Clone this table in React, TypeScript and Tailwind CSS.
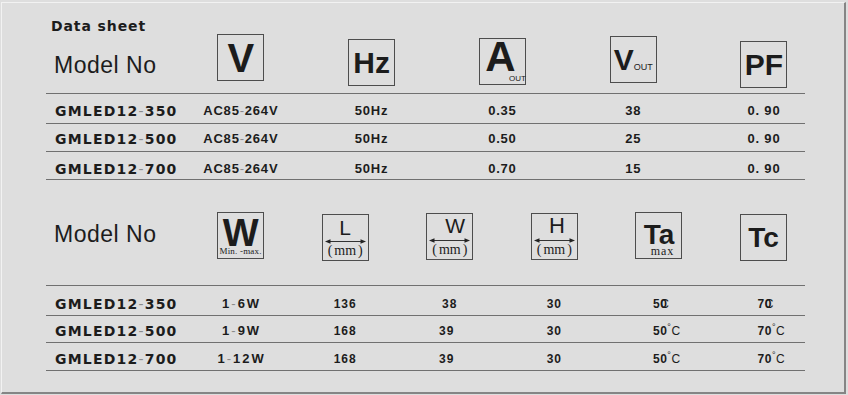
import type { ReactNode } from "react";

const Dash = () => <span className="font-normal text-[#8a8a8a]">-</span>;

// grey framed unit symbol, 47x47
const IconBox = ({ className = "", children }: { className?: string; children: ReactNode }) => (
  <div className={`relative w-[47px] h-[47px] border border-[#4d4d4d] ${className}`}>{children}</div>
);

const DimArrow = ({ className = "" }: { className?: string }) => (
  <svg width="41" height="7" viewBox="0 0 41 7" className={`block ${className}`}>
    <line x1="3" y1="3.5" x2="38" y2="3.5" stroke="#333" strokeWidth="1" />
    <path d="M0 3.5 L5.5 1.3 L5.5 5.7 Z" fill="#222" />
    <path d="M41 3.5 L35.5 1.3 L35.5 5.7 Z" fill="#222" />
  </svg>
);

const Mm = () => (
  <div className="text-[14px] leading-[12px] whitespace-nowrap font-['Liberation_Serif','Times_New_Roman',serif]">
    (<span className="mx-[2px]">mm</span>)
  </div>
);

const Degree = ({ n }: { n: string }) => (
  <span>
    {n}
    <span className="text-[9px] align-top leading-none font-normal">°</span>
    <span className="font-normal">C</span>
  </span>
);

const Overlap = ({ a }: { a: string }) => (
  <span>
    {a}
    <span className="relative inline-block">
      0<span className="absolute left-0 top-0 font-normal">C</span>
    </span>
  </span>
);

const modelCls = "pl-[9px] whitespace-nowrap text-[14px] leading-[16px] font-bold tracking-[1.2px] font-['DejaVu_Sans',sans-serif]";
const valCls = "flex justify-center whitespace-nowrap text-[13px] leading-[16px] font-bold tracking-[0.8px]";
const val2Cls = "flex justify-center text-[12px] leading-[16px] font-bold tracking-[1px]";

const rows1 = [
  { m: "350", a: "0.35", v: "38", h: "h-[30px] pt-[5px]" },
  { m: "500", a: "0.50", v: "25", h: "h-[28px] pt-[3px]" },
  { m: "700", a: "0.70", v: "15", h: "h-[28px] pt-[6px]" },
];

const rows2 = [
  { m: "350", w: "6W", l: "136", wd: "38", wdCls: "", h: "h-[30px] pt-[6px]", ta: <Overlap a="5" />, tc: <Overlap a="7" /> },
  { m: "500", w: "9W", l: "168", wd: "39", wdCls: "pr-[6px]", h: "h-[27px] pt-[3px]", ta: <Degree n="50" />, tc: <Degree n="70" /> },
  { m: "700", w: "12W", l: "168", wd: "39", wdCls: "pr-[6px]", h: "h-[28px] pt-[5px]", ta: <Degree n="50" />, tc: <Degree n="70" /> },
];

export default function App() {
  return (
    <div className="w-[848px] h-[395px] overflow-hidden bg-[#dedede] text-[#1c1c1c] font-['Liberation_Sans',Arial,sans-serif]">
      <div className="ml-px mt-[2px] w-[845px] h-[392px] border-t border-l border-t-[#f2f2f2] border-l-[#f2f2f2] border-r-2 border-b-2 border-r-[#858585] border-b-[#858585] pt-[15px] pl-[44px]">
        <div className="w-[759px]">
          <div className="pl-[5px] h-[16px] leading-[16px] text-[14px] font-bold tracking-[0.9px] font-['DejaVu_Sans',sans-serif]">
            Data sheet
          </div>

          {/* electrical header */}
          <div className="grid grid-cols-[104px_repeat(5,80px)] gap-x-[50.8px] items-start h-[60px] border-b border-[#707070]">
            <div className="pl-[8px] mt-[17px] text-[23px] leading-[28px] tracking-[0.5px] whitespace-nowrap">Model No</div>
            <div className="flex justify-center">
              <IconBox className="flex items-center justify-center">
                <span className="text-[40px] leading-none font-bold">V</span>
              </IconBox>
            </div>
            <div className="flex justify-center">
              <IconBox className="mt-[5px] flex items-center justify-center">
                <span className="text-[30px] leading-none font-bold">Hz</span>
              </IconBox>
            </div>
            <div className="flex justify-center">
              <IconBox className="mt-[4px] flex items-center justify-center pr-[4px] pb-[9px]">
                <span className="text-[42px] leading-none font-bold">A</span>
                <span className="absolute right-[-1px] bottom-[1px] text-[8px] leading-none">OUT</span>
              </IconBox>
            </div>
            <div className="flex justify-center">
              <IconBox className="mt-[2px] flex items-baseline justify-center pt-[8px]">
                <span className="text-[30px] leading-[30px] font-bold">V</span>
                <span className="text-[9px] leading-none">OUT</span>
              </IconBox>
            </div>
            <div className="flex justify-center">
              <IconBox className="mt-[7px] flex items-center justify-center">
                <span className="text-[30px] leading-none font-bold">PF</span>
              </IconBox>
            </div>
          </div>

          {rows1.map((r) => (
            <div key={r.m} className={`grid grid-cols-[104px_repeat(5,80px)] gap-x-[50.8px] items-center border-b border-[#707070] ${r.h}`}>
              <div className={modelCls}>
                GMLED12<Dash />{r.m}
              </div>
              <div className={valCls}>
                AC85<Dash />264V
              </div>
              <div className={valCls}>50Hz</div>
              <div className={valCls}>{r.a}</div>
              <div className={valCls}>{r.v}</div>
              <div className={valCls}>0. 90</div>
            </div>
          ))}

          {/* mechanical / thermal header */}
          <div className="grid grid-cols-[130px_repeat(6,80px)] gap-x-[24.6px] items-start h-[106px] pt-[32px] border-b border-[#707070]">
            <div className="pl-[8px] mt-[8px] text-[23px] leading-[28px] tracking-[0.5px] whitespace-nowrap">Model No</div>
            <div className="flex justify-center">
              <IconBox className="flex flex-col items-center">
                <span className="mt-[6px] text-[38px] leading-[28px] font-bold">W</span>
                <span className="text-[9px] leading-[9px] tracking-[0.2px] whitespace-nowrap font-['Liberation_Serif','Times_New_Roman',serif]">
                  Min. -max.
                </span>
              </IconBox>
            </div>
            <div className="flex justify-center">
              <IconBox className="mt-[2px] flex flex-col items-center">
                <div className="mt-[2px] text-[21px] leading-[21px]">L</div>
                <DimArrow />
                <Mm />
              </IconBox>
            </div>
            <div className="flex justify-center">
              <IconBox className="mt-[1px] flex flex-col items-center">
                <div className="mt-[1px] ml-[11px] text-[21px] leading-[21px]">W</div>
                <DimArrow className="mt-[1px]" />
                <Mm />
              </IconBox>
            </div>
            <div className="flex justify-center">
              <IconBox className="mt-[1px] flex flex-col items-center">
                <div className="mt-[1px] ml-[5px] text-[22px] leading-[22px]">H</div>
                <DimArrow />
                <Mm />
              </IconBox>
            </div>
            <div className="flex justify-center">
              <IconBox className="flex flex-col items-center">
                <span className="mt-[8px] text-[28px] leading-[28px] font-bold">Ta</span>
                <span className="mt-[-3px] ml-[7px] text-[12px] leading-[10px] tracking-[1px] font-['Liberation_Serif','Times_New_Roman',serif]">
                  max
                </span>
              </IconBox>
            </div>
            <div className="flex justify-center">
              <IconBox className="mt-[2px] flex items-center justify-center">
                <span className="text-[28px] leading-none font-bold">Tc</span>
              </IconBox>
            </div>
          </div>

          {rows2.map((r) => (
            <div key={r.m} className={`grid grid-cols-[130px_repeat(6,80px)] gap-x-[24.6px] items-center border-b border-[#707070] ${r.h}`}>
              <div className={modelCls}>
                GMLED12<Dash />{r.m}
              </div>
              <div className="flex justify-center text-[13px] leading-[16px] font-bold tracking-[2px]">
                <span className="whitespace-nowrap pl-[2px]">1<Dash />{r.w}</span>
              </div>
              <div className={val2Cls}>{r.l}</div>
              <div className={`${val2Cls} ${r.wdCls}`}>{r.wd}</div>
              <div className={val2Cls}>30</div>
              <div className="pl-[34px] text-[12px] leading-[16px] font-bold tracking-[0.5px] whitespace-nowrap">{r.ta}</div>
              <div className="pl-[34px] text-[12px] leading-[16px] font-bold tracking-[0.5px] whitespace-nowrap">{r.tc}</div>
            </div>
          ))}
        </div>
      </div>
    </div>
  );
}
